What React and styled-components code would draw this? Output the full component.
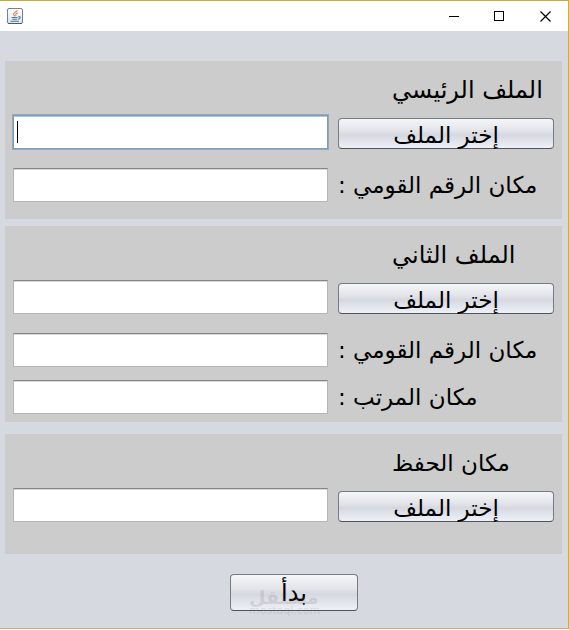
import React from "react";
import styled, { createGlobalStyle, css } from "styled-components";

const GlobalStyle = createGlobalStyle`
  * { box-sizing: border-box; }
  body { margin: 0; background: #fff; }
`;

const Window = styled.div`
  display: flex;
  flex-direction: column;
  min-height: calc(100vh - 1px);
  border-top: 1px solid #c8a945;
  border-right: 1px solid #dba92f;
  border-bottom: 1px solid #cfb057;
  background: #d6d9e0;
  color: #000;
  font-family: "DejaVu Sans", Tahoma, sans-serif;
  font-size: 23px;
`;

const TitleBar = styled.header`
  display: flex;
  align-items: center;
  justify-content: space-between;
  height: 30px;
  padding-left: 7px;
  background: #fff;
`;

const WindowControls = styled.div`
  display: flex;
`;

const WindowButton = styled.button`
  display: grid;
  place-items: center;
  width: 46px;
  height: 28px;
  padding: 0;
  border: 0;
  background: transparent;
`;

const Form = styled.form`
  display: flex;
  flex-direction: column;
  padding: 30px 6px 17px 5px;
`;

const Panel = styled.section`
  padding: 14px 8px ${(p) => p.$bottom}px;
  margin-bottom: ${(p) => p.$gap}px;
  background: #ccc;
`;

const Row = styled.div`
  display: grid;
  grid-template-columns: 315fr 216fr;
  column-gap: 10px;
  align-items: center;
  margin-top: ${(p) => p.$gap || 0}px;
`;

const Heading = styled.h2`
  grid-column: 2;
  margin: 0;
  padding-left: 54px;
  font-size: ${(p) => (p.$small ? 23 : 24)}px;
  font-weight: 400;
  line-height: 30px;
  text-align: left;
  white-space: nowrap;
`;

const Label = styled.label`
  line-height: 30px;
  white-space: nowrap;
  text-align: left;
`;

const TextField = styled.input`
  width: 100%;
  height: 34px;
  padding: 0 4px;
  border: 1px solid #b4b5b7;
  border-top: 1px solid #85868a;
  border-radius: 0;
  background: #fff;
  box-shadow: inset 0 1px #d8d8d8;
  font: inherit;
  outline: 0;

  ${(p) =>
    p.$active &&
    css`
      border-color: #819bb4;
      box-shadow: 0 0 0 1px #91aac1, inset 0 1px #b7c8d5;
    `}
`;

const FieldFrame = styled.div`
  display: grid;
  position: relative;
`;

const Caret = styled.span`
  position: absolute;
  top: 6px;
  left: 4px;
  width: 1px;
  height: 22px;
  background: #000;
`;

const PushButton = styled.button`
  display: flex;
  align-items: center;
  justify-content: center;
  height: ${(p) => (p.$large ? 37 : 31)}px;
  padding: ${(p) => (p.$large ? 0 : 3)}px 0 0;
  border: 1px solid #777b84;
  border-bottom-color: #50545d;
  border-radius: 4px;
  background: linear-gradient(#f5f6f8, #e2e4e9 40%, #d5d8df 55%, #e8ebf1 90%, #eff1f5);
  color: #000;
  font: inherit;
  line-height: 28px;
  white-space: nowrap;
`;

const FileButton = styled(PushButton)`
  margin-top: 3px;
`;

const Actions = styled.footer`
  display: grid;
  grid-template-columns: 225fr 128fr 204fr;
  padding-top: 20px;

  ${PushButton} {
    grid-column: 2;
    position: relative;
  }
`;

const Watermark = styled.span`
  position: absolute;
  top: 7px;
  left: 18px;
  color: rgba(120, 120, 120, 0.2);
  font-size: 19px;
  font-weight: 700;
  line-height: 30px;
  pointer-events: none;
`;

const WatermarkUrl = styled(Watermark)`
  top: 31px;
  font-size: 11px;
  font-weight: 400;
  line-height: 10px;
`;

const Caption = styled.span`
  font-size: 24px;
`;

function JavaIcon() {
  return (
    <svg width="16" height="16" viewBox="0 0 16 16" fill="none" aria-label="Java" role="img">
      <defs>
        <linearGradient id="tile" x1="0" y1="0" x2="0" y2="1">
          <stop offset="0" stopColor="#fff" />
          <stop offset="1" stopColor="#dbe3e9" />
        </linearGradient>
      </defs>
      <rect x=".5" y=".5" width="15" height="15" rx="1.5" fill="url(#tile)" stroke="#71828f" />
      <path d="M1 15.5h14" stroke="#3f6078" />
      <path d="M10.4 2.3C9.6 4 6.2 4.5 6.6 6.3c.2.9 1 1.3 1.1 2.2M10.7 4.7C8.6 5.8 8.3 6.3 9 8" stroke="#dd8751" strokeWidth="1.1" />
      <path d="M4.6 9.5h6M5.3 11.2h4.9M3.6 13.2h8.2M11.4 8.7c2.5-.4 2.2 1.9-.3 2.5" stroke="#547b96" strokeWidth="1.1" />
    </svg>
  );
}

function FileRow({ id, active }) {
  return (
    <Row $gap={10}>
      <FieldFrame>
        <TextField id={id} type="text" aria-label="مسار الملف" $active={active} />
        {active && <Caret />}
      </FieldFrame>
      <FileButton type="button">إختر الملف</FileButton>
    </Row>
  );
}

function LabeledRow({ id, label, gap }) {
  return (
    <Row $gap={gap}>
      <TextField id={id} type="text" />
      <Label htmlFor={id} dir="rtl">
        <bdi>{label}</bdi>
      </Label>
    </Row>
  );
}

function PanelTitle({ small, children }) {
  return (
    <Row>
      <Heading $small={small}>{children}</Heading>
    </Row>
  );
}

export default function App() {
  return (
    <>
      <GlobalStyle />
      <Window>
        <TitleBar>
          <JavaIcon />
          <WindowControls>
            <WindowButton type="button" aria-label="تصغير">
              <svg width="11" height="11" viewBox="0 0 11 11" stroke="#000">
                <path d="M1 5.5h10" />
              </svg>
            </WindowButton>
            <WindowButton type="button" aria-label="تكبير">
              <svg width="11" height="11" viewBox="0 0 11 11" fill="none" stroke="#000">
                <rect x=".5" y=".5" width="9" height="9" />
              </svg>
            </WindowButton>
            <WindowButton type="button" aria-label="إغلاق">
              <svg width="11" height="11" viewBox="0 0 11 11" stroke="#000" strokeWidth="1.2">
                <path d="M.5.5l10 10M10.5.5l-10 10" />
              </svg>
            </WindowButton>
          </WindowControls>
        </TitleBar>
        <Form onSubmit={(event) => event.preventDefault()}>
          <Panel $bottom={17} $gap={7}>
            <PanelTitle>الملف الرئيسي</PanelTitle>
            <FileRow id="main-file" active />
            <LabeledRow id="main-national-id" label="مكان الرقم القومي :" gap={19} />
          </Panel>
          <Panel $bottom={8} $gap={12}>
            <PanelTitle>الملف الثاني</PanelTitle>
            <FileRow id="second-file" />
            <LabeledRow id="second-national-id" label="مكان الرقم القومي :" gap={19} />
            <LabeledRow id="salary" label="مكان المرتب :" gap={13} />
          </Panel>
          <Panel $bottom={32} $gap={0}>
            <PanelTitle small>مكان الحفظ</PanelTitle>
            <FileRow id="save-location" />
          </Panel>
          <Actions>
            <PushButton type="submit" $large>
              <Caption>بدأ</Caption>
              <Watermark aria-hidden="true">مستقل</Watermark>
              <WatermarkUrl aria-hidden="true">mostaql.com</WatermarkUrl>
            </PushButton>
          </Actions>
        </Form>
      </Window>
    </>
  );
}
